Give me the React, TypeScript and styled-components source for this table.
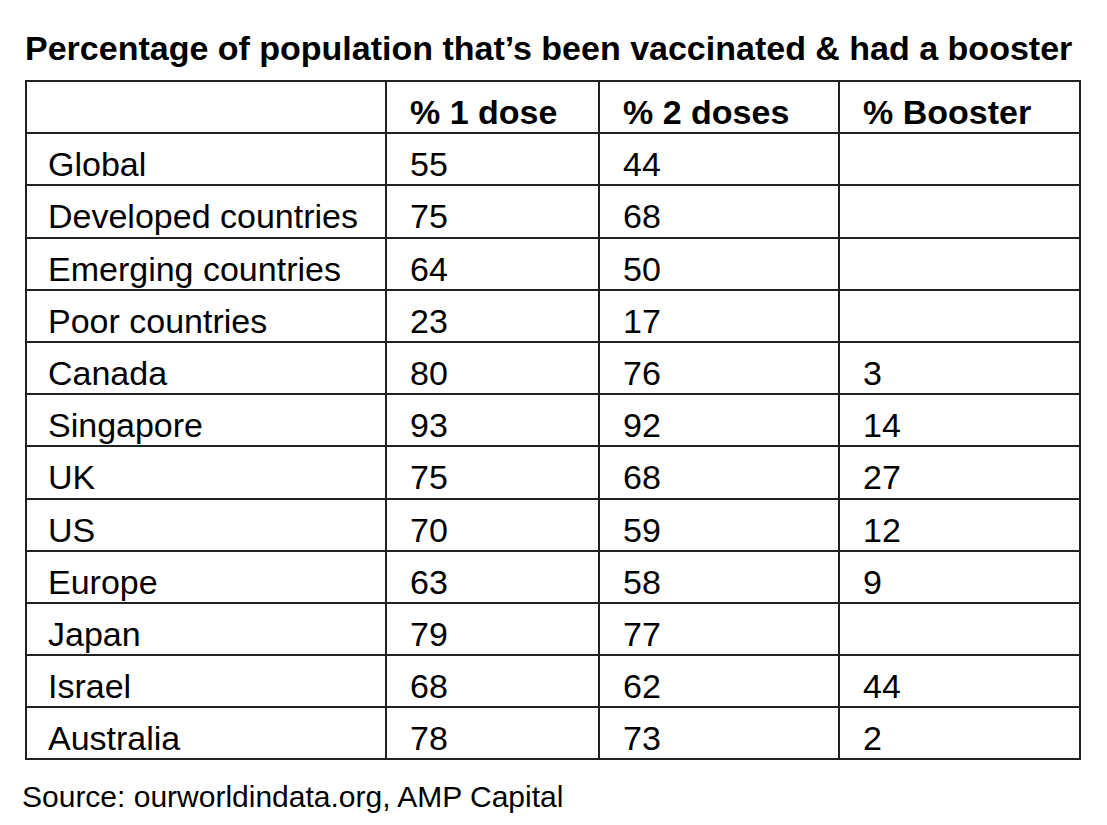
import * as React from 'react';
import styled, { createGlobalStyle } from 'styled-components';

const GlobalStyle = createGlobalStyle`
    html, body {
        margin: 0;
        padding: 0;
        background: #ffffff;
    }
    body {
        font-family: 'Liberation Sans', Arial, sans-serif;
        color: #000;
    }
`;

const Page = styled.div`
    width: 1107px;
    height: 825px;
    padding: 28px 0 0 25px;
    box-sizing: border-box;
`;

const Title = styled.h1`
    margin: 0;
    font-size: 34px;
    line-height: 40px;
    font-weight: 700;
    white-space: nowrap;
`;

const Table = styled.table`
    margin-top: 12px;
    width: 1054px;
    border-collapse: collapse;
    table-layout: fixed;
    font-size: 34px;
    line-height: 1.15;
`;

const Col = styled.col<{ $w: number }>`
    width: ${(p) => p.$w}px;
`;

const Cell = styled.td`
    height: 52.2px;
    padding: 0 0 0 23px;
    border: 2px solid #222;
    vertical-align: bottom;
    text-align: left;
    font-weight: 400;
    white-space: nowrap;
    box-sizing: border-box;
    &:first-child {
        padding-left: 21px;
    }
`;

const HeadCell = styled(Cell).attrs({ as: 'th' })`
    font-weight: 700;
`;

const Source = styled.p`
    margin: 19px 0 0 -3px;
    font-size: 30px;
    line-height: 36px;
`;

const columns = [360, 213, 240, 241];
const headers = ['', '% 1 dose', '% 2 doses', '% Booster'];

const rows: [string, string, string, string][] = [
    ['Global', '55', '44', ''],
    ['Developed countries', '75', '68', ''],
    ['Emerging countries', '64', '50', ''],
    ['Poor countries', '23', '17', ''],
    ['Canada', '80', '76', '3'],
    ['Singapore', '93', '92', '14'],
    ['UK', '75', '68', '27'],
    ['US', '70', '59', '12'],
    ['Europe', '63', '58', '9'],
    ['Japan', '79', '77', ''],
    ['Israel', '68', '62', '44'],
    ['Australia', '78', '73', '2'],
];

export default function App() {
    return (
        <>
            <GlobalStyle />
            <Page>
                <Title>Percentage of population that’s been vaccinated &amp; had a booster</Title>
                <Table>
                    <colgroup>
                        {columns.map((w, i) => (
                            <Col key={i} $w={w} />
                        ))}
                    </colgroup>
                    <thead>
                        <tr>
                            {headers.map((h, i) => (
                                <HeadCell key={i}>{h}</HeadCell>
                            ))}
                        </tr>
                    </thead>
                    <tbody>
                        {rows.map((r) => (
                            <tr key={r[0]}>
                                {r.map((v, i) => (
                                    <Cell key={i}>{v}</Cell>
                                ))}
                            </tr>
                        ))}
                    </tbody>
                </Table>
                <Source>Source: ourworldindata.org, AMP Capital</Source>
            </Page>
        </>
    );
}
